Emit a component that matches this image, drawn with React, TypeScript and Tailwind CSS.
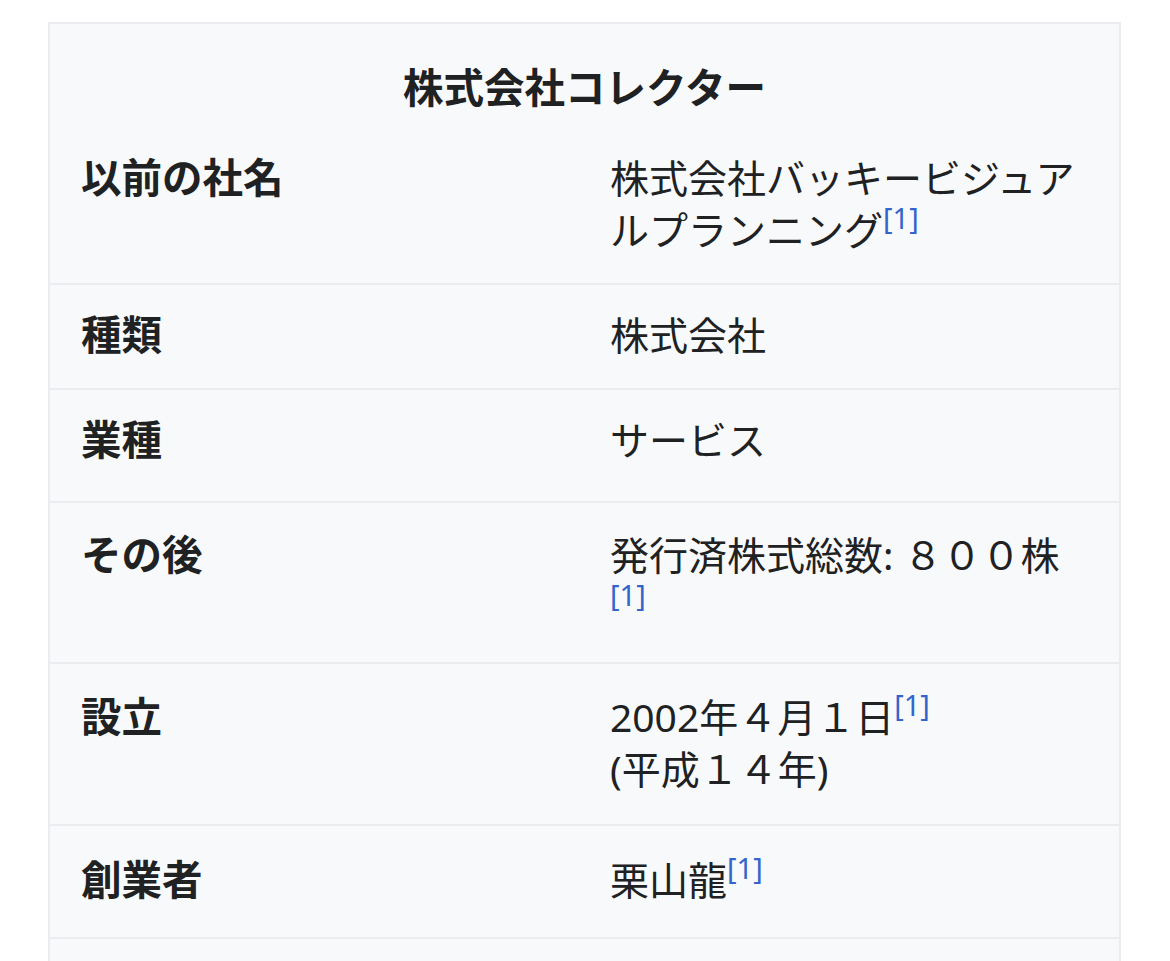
import React from "react";

type InfoRow = {
  label: string;
  value: React.ReactNode;
  rowClass: string;
};

function Ref(): React.JSX.Element {
  return (
    <sup className="align-[2px] text-[29px] leading-[0] text-[#3366cc]">
      [1]
    </sup>
  );
}

const rows: InfoRow[] = [
  {
    label: "種類",
    value: "株式会社",
    rowClass: "h-[105px] pt-[24px]",
  },
  {
    label: "業種",
    value: "サービス",
    rowClass: "h-[113px] pt-[24px]",
  },
  {
    label: "その後",
    value: (
      <>
        発行済株式総数: ８００株
        <Ref />
      </>
    ),
    rowClass: "h-[161px] pt-[26px]",
  },
  {
    label: "設立",
    value: (
      <>
        2002年４月１日
        <Ref />
        <br />
        (平成１４年)
      </>
    ),
    rowClass: "h-[162px] pt-[27px]",
  },
  {
    label: "創業者",
    value: (
      <>
        栗山龍
        <Ref />
      </>
    ),
    rowClass: "h-[113px] pt-[28px]",
  },
];

export default function App(): React.JSX.Element {
  return (
    <div
      className="h-[961px] overflow-hidden bg-white pl-[48px] pt-[22px] text-[#202122]"
      style={{ fontFamily: "'Noto Sans', 'Noto Sans CJK JP', sans-serif" }}
    >
      <div className="w-[1073px] border-2 border-[#eaecf0] bg-[#f8f9fa]">
        <div className="h-[128px] pt-[38px] text-center text-[40.5px] font-bold leading-[52px]">
          株式会社コレクター
        </div>

        <div className="grid h-[131px] grid-cols-[560px_1fr] text-[39px] leading-[52px]">
          <div className="pl-[31px] text-[40.5px] font-bold">以前の社名</div>
          <div className="pr-[34px]">
            株式会社バッキービジュアルプランニング
            <Ref />
          </div>
        </div>

        {rows.map((row) => (
          <div
            key={row.label}
            className={[
              "grid grid-cols-[560px_1fr] border-t-2 border-[#eaecf0] text-[39px] leading-[52px]",
              row.rowClass,
            ].join(" ")}
          >
            <div className="pl-[31px] text-[40.5px] font-bold">{row.label}</div>
            <div className="pr-[34px]">{row.value}</div>
          </div>
        ))}

        <div className="h-[120px] border-t-2 border-[#eaecf0]" />
      </div>
    </div>
  );
}
